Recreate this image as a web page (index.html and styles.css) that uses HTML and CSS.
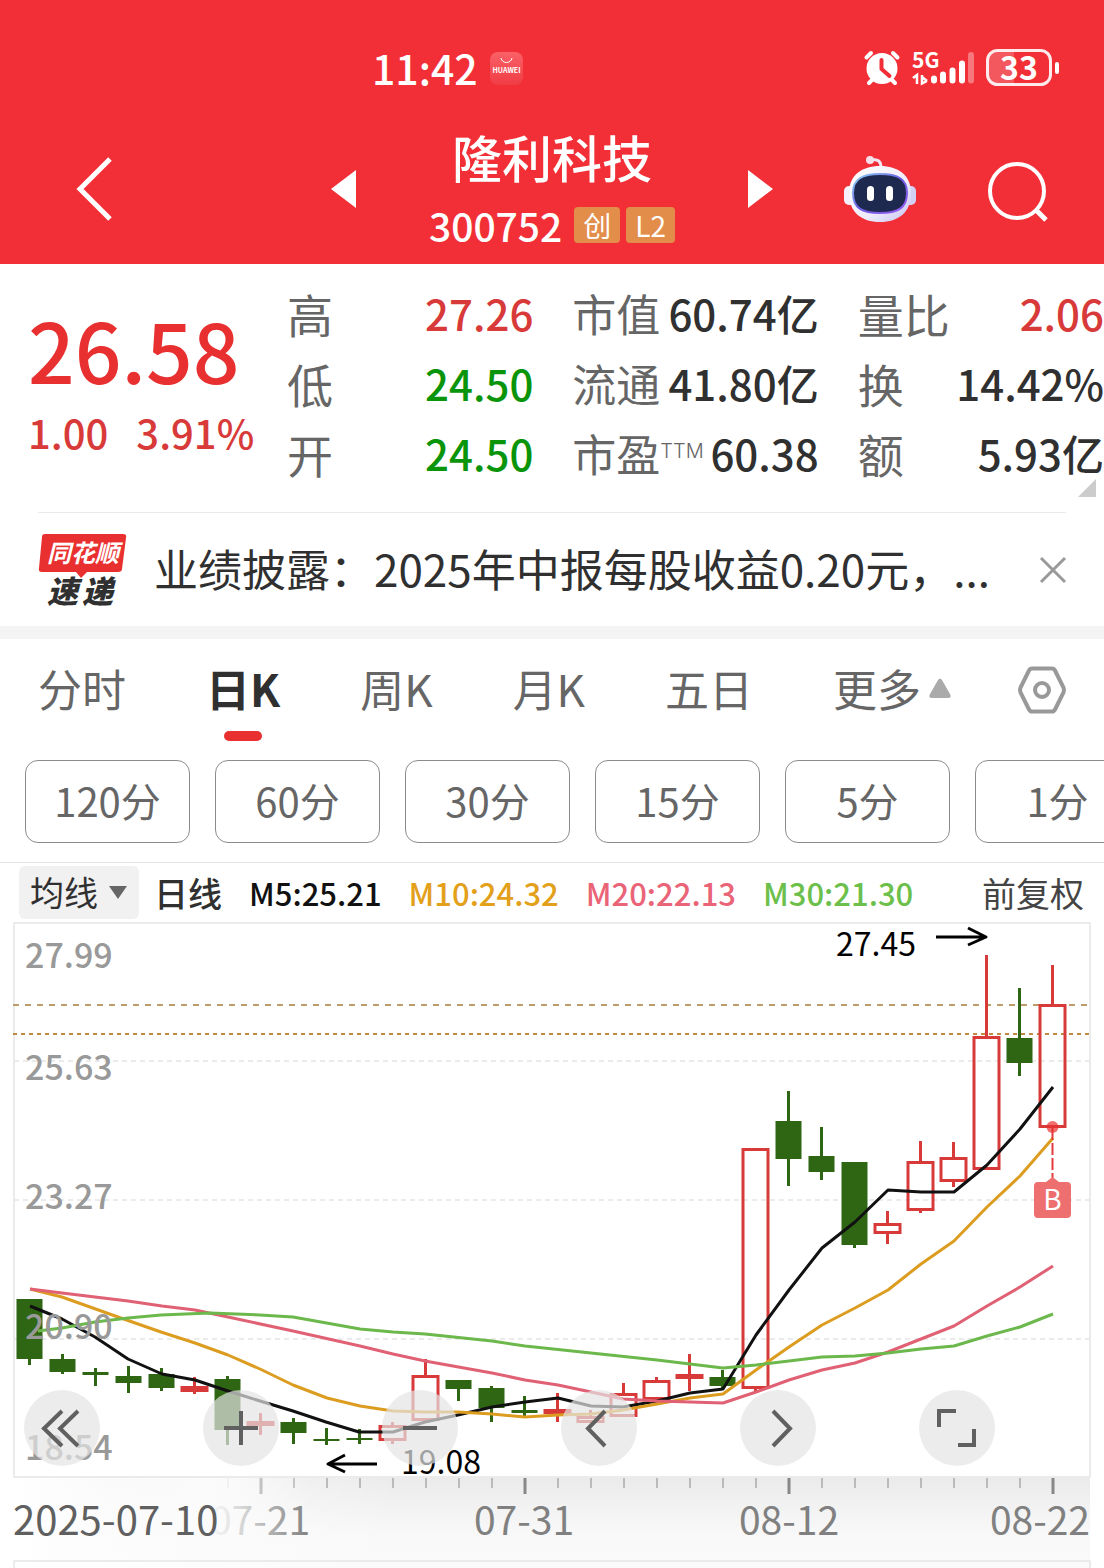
FILE: index.html
```html
<!DOCTYPE html>
<html lang="zh-CN">
<head>
	<meta charset="utf-8">
	<meta name="viewport" content="width=device-width, initial-scale=1.0">
	<title>隆利科技 300752</title>
	<link rel="stylesheet" href="styles.css">
</head>
<body>
	<header class="header">
		<div class="status">
			<div class="status-left">
				<span class="time">11:42</span>
				<svg class="huawei" width="33" height="33" viewBox="0 0 33 33">
					<defs>
						<linearGradient id="hw" x1="0" y1="0" x2="0" y2="1">
							<stop offset="0" stop-color="#fa6168"/>
							<stop offset="1" stop-color="#f03c45"/>
						</linearGradient>
					</defs>
					<rect width="33" height="33" rx="8" fill="url(#hw)"/>
					<path d="M11 6c1 6 10 6 11 0" fill="none" stroke="#fff" stroke-width="1"/>
					<text x="16.5" y="21" text-anchor="middle" class="huawei-text">HUAWEI</text>
				</svg>
			</div>
			<div class="status-right">
				<svg width="36" height="36" viewBox="0 0 36 36">
					<g stroke="#fff" stroke-width="4" stroke-linecap="round">
						<path d="M2.500 7.500L7 3M33.500 7.500L29 3M9 29l-4 4M27 29l4 4"/>
					</g>
					<circle cx="18" cy="18.500" r="15.500" fill="#fff"/>
					<path d="M17.500 10v9l8 7" fill="none" stroke="#f22f37" stroke-width="4" stroke-linecap="round" stroke-linejoin="round"/>
				</svg>
				<svg width="62" height="36" viewBox="0 0 62 36">
					<text x="0" y="18" class="net">5G</text>
					<path d="M1 28l4-3v9M15 31l-5 2.500V25M10 27l5 4" fill="none" stroke="#fff" stroke-width="2.500"/>
					<g stroke="#fff" stroke-width="6" stroke-linecap="round">
						<path d="M22 28.500v2M31 24.500v6M40.500 20.500v10M50 13.500v17"/>
						<path d="M59 5v25.500" stroke-opacity=".35"/>
					</g>
				</svg>
				<svg width="74" height="38" viewBox="0 0 74 38">
					<path d="M12 2h16v34H12A10 10 0 0 1 2 26V12A10 10 0 0 1 12 2z" fill="#fff" fill-opacity=".2"/>
					<rect x="1.500" y="1.500" width="63" height="34" rx="10" fill="none" stroke="#fff" stroke-opacity=".9" stroke-width="3"/>
					<rect x="69" y="13" width="4" height="12" rx="2" fill="#fff"/>
					<text x="33" y="31" text-anchor="middle" class="battery">33</text>
				</svg>
			</div>
		</div>
		<nav class="nav">
			<button class="icon-btn back" type="button" aria-label="返回">
				<svg width="38" height="64" viewBox="0 0 38 64"><path d="M34 2L4 32l30 30" fill="none" stroke="#fff" stroke-width="5"/></svg>
			</button>
			<div class="stock">
				<button class="icon-btn" type="button" aria-label="上一只">
					<svg width="25" height="38" viewBox="0 0 25 38"><path d="M25 0v38L0 19z" fill="#fff"/></svg>
				</button>
				<div class="stock-title">
					<h1>隆利科技</h1>
					<div class="code">
						<span>300752</span>
						<span class="tag">创</span>
						<span class="tag tag-l2">L2</span>
					</div>
				</div>
				<button class="icon-btn" type="button" aria-label="下一只">
					<svg width="25" height="38" viewBox="0 0 25 38"><path d="M0 0v38l25-19z" fill="#fff"/></svg>
				</button>
			</div>
			<div class="nav-right">
				<button class="icon-btn" type="button" aria-label="智能助手">
					<svg width="72" height="68" viewBox="0 0 72 68">
						<defs>
							<linearGradient id="head" x1="0" y1="0" x2="1" y2="1">
								<stop offset="0" stop-color="#fff"/>
								<stop offset=".6" stop-color="#f0ecfb"/>
								<stop offset="1" stop-color="#c6c3f2"/>
							</linearGradient>
							<linearGradient id="rim" x1="0" y1="0" x2="1" y2="1">
								<stop offset="0" stop-color="#8fd8f5"/>
								<stop offset=".5" stop-color="#6a5be0"/>
								<stop offset="1" stop-color="#9a5cf0"/>
							</linearGradient>
						</defs>
						<path d="M28 5c6-1 9 1 9 8" fill="none" stroke="#f3e6f2" stroke-width="3"/>
						<circle cx="26" cy="5" r="4" fill="#f6dfe8"/>
						<rect x="0" y="31" width="12" height="19" rx="5" fill="#f5f0fb"/>
						<rect x="60" y="31" width="12" height="19" rx="5" fill="#d3d0f6"/>
						<path d="M36 11c18 0 31 9 31 27 0 19-12 29-31 29S5 57 5 38C5 20 18 11 36 11z" fill="url(#head)"/>
						<path d="M36 19c18 0 27 5 27 19 0 15-9 20-27 20S9 53 9 38c0-14 9-19 27-19z" fill="#1e2950" stroke="url(#rim)" stroke-width="2"/>
						<rect x="23" y="31" width="7" height="15" rx="3.500" fill="#fff"/>
						<rect x="42" y="31" width="7" height="15" rx="3.500" fill="#fff"/>
					</svg>
				</button>
				<button class="icon-btn" type="button" aria-label="搜索">
					<svg width="60" height="66" viewBox="0 -6 60 66"><circle cx="29" cy="29" r="27" fill="none" stroke="#fff" stroke-width="4"/><path d="M47 47l11 11" stroke="#fff" stroke-width="5"/></svg>
				</button>
			</div>
		</nav>
	</header>

	<section class="quote">
		<div class="price">
			<div class="price-now">26.58</div>
			<div class="price-change"><span>1.00</span><span>3.91%</span></div>
		</div>
		<dl class="stats">
			<div class="stat"><dt>高</dt><dd class="up">27.26</dd></div>
			<div class="stat"><dt>市值</dt><dd>60.74亿</dd></div>
			<div class="stat"><dt>量比</dt><dd class="up">2.06</dd></div>
			<div class="stat"><dt>低</dt><dd class="down">24.50</dd></div>
			<div class="stat"><dt>流通</dt><dd>41.80亿</dd></div>
			<div class="stat"><dt>换</dt><dd>14.42%</dd></div>
			<div class="stat"><dt>开</dt><dd class="down">24.50</dd></div>
			<div class="stat"><dt>市盈<span class="ttm">TTM</span></dt><dd>60.38</dd></div>
			<div class="stat"><dt>额</dt><dd>5.93亿</dd></div>
		</dl>
		<span class="corner"></span>
	</section>

	<section class="news">
		<svg class="news-logo" width="90" height="76" viewBox="0 0 90 76">
			<path d="M7 2h78q4 0 3 4l-4 31q0 3-4 3H49l-6 6-5-6H4q-4 0-3-4L4 5q0-3 3-3z" fill="#e93030"/>
			<text x="9" y="30" class="logo-top">同花顺</text>
			<text x="9" y="71" class="logo-bottom">速</text>
			<text x="44" y="71" class="logo-bottom">递</text>
		</svg>
		<a class="news-text" href="#">业绩披露：2025年中报每股收益0.20元，...</a>
		<button class="icon-btn" type="button" aria-label="关闭">
			<svg width="26" height="26" viewBox="0 0 26 26"><path d="M1 1l24 24M25 1L1 25" stroke="#999" stroke-width="3"/></svg>
		</button>
	</section>

	<nav class="tabs">
		<div class="tab-list">
			<button type="button" class="tab">分时</button>
			<button type="button" class="tab active">日K</button>
			<button type="button" class="tab">周K</button>
			<button type="button" class="tab">月K</button>
			<button type="button" class="tab">五日</button>
			<button type="button" class="tab more">更多
				<svg width="22" height="20" viewBox="0 0 22 20"><path d="M9 2q2-3 4 0l8 14q2 4-2 4H3q-4 0-2-4z" fill="#aaa"/></svg>
			</button>
		</div>
		<button type="button" class="icon-btn settings" aria-label="设置">
			<svg width="48" height="48" viewBox="0 0 48 48">
				<path d="M14 2.500h20q2 0 3 2l8.500 17q1 2.500 0 5L37 43.500q-1 2-3 2H14q-2 0-3-2L2.500 26.500q-1-2.500 0-5L11 4.500q1-2 3-2z" fill="none" stroke="#999" stroke-width="4"/>
				<circle cx="24" cy="24" r="7" fill="none" stroke="#999" stroke-width="4"/>
			</svg>
		</button>
	</nav>

	<div class="periods">
		<button type="button" class="period">120分</button>
		<button type="button" class="period">60分</button>
		<button type="button" class="period">30分</button>
		<button type="button" class="period">15分</button>
		<button type="button" class="period">5分</button>
		<button type="button" class="period">1分</button>
	</div>

	<div class="legend">
		<label class="indicator">
			<select aria-label="指标">
				<option>均线</option>
			</select>
		</label>
		<span class="legend-name">日线</span>
		<span class="ma ma5">M5:25.21</span>
		<span class="ma ma10">M10:24.32</span>
		<span class="ma ma20">M20:22.13</span>
		<span class="ma ma30">M30:21.30</span>
		<button type="button" class="adjust">前复权</button>
	</div>

	<section class="chart">
		<svg class="kline" viewBox="0 922 1104 646">
			<defs>
				<linearGradient id="axisbg" x1="0" y1="0" x2="0" y2="1">
					<stop offset="0" stop-color="#ebebeb"/>
					<stop offset=".6" stop-color="#f8f8f8"/>
					<stop offset="1" stop-color="#fafafa"/>
				</linearGradient>
				<linearGradient id="axisfade" x1="0" y1="0" x2="1" y2="0">
					<stop offset="0" stop-color="#fff"/>
					<stop offset="1" stop-color="#fff" stop-opacity="0"/>
				</linearGradient>
				<linearGradient id="datefade" x1="0" y1="0" x2="1" y2="0">
					<stop offset="0" stop-color="#fbfbfb" stop-opacity="0"/>
					<stop offset=".65" stop-color="#fbfbfb"/>
					<stop offset=".72" stop-color="#fbfbfb" stop-opacity=".85"/>
					<stop offset="1" stop-color="#fbfbfb" stop-opacity="0"/>
				</linearGradient>
			</defs>

			<!-- date axis background -->
			<rect x="14" y="1478" width="1076" height="90" fill="url(#axisbg)"/>
			<rect x="14" y="1478" width="386" height="90" fill="url(#axisfade)"/>

			<!-- frame and grid -->
			<path class="frame" d="M14 923H1090V1477H14zM14 1568V1561H1090V1568"/>
			<path class="grid" d="M14 1061H1090M14 1200H1090M14 1339H1090"/>
			<path class="line-last" d="M13 1005H1090"/>
			<path class="line-cost" d="M13 1034H1090"/>

			<!-- candles: down -->
			<path class="wick down-line" d="M29.500 1359V1365M62.500 1354V1374M95.500 1368V1386M128.500 1366V1393M161.500 1368V1391M227.500 1376V1445M293.500 1418V1444M326.500 1428V1445M359.500 1429V1444M458.500 1380V1401M491.500 1386V1422M524.500 1396V1417M722.500 1370V1389M788.500 1091V1186M821.500 1127V1180M854.500 1162V1248M1019.500 988V1076"/>
			<g class="down-body">
				<rect x="16.500" y="1299" width="26" height="60"/>
				<rect x="49.500" y="1359" width="26" height="13"/>
				<rect x="82.500" y="1372" width="26" height="3"/>
				<rect x="115.500" y="1376" width="26" height="7"/>
				<rect x="148.500" y="1374" width="26" height="14"/>
				<rect x="214.500" y="1379" width="26" height="51"/>
				<rect x="280.500" y="1422" width="26" height="11"/>
				<rect x="313.500" y="1439" width="26" height="2"/>
				<rect x="346.500" y="1438" width="26" height="2"/>
				<rect x="445.500" y="1380" width="26" height="9"/>
				<rect x="478.500" y="1388" width="26" height="20"/>
				<rect x="511.500" y="1410" width="26" height="3"/>
				<rect x="709.500" y="1377" width="26" height="9"/>
				<rect x="775.500" y="1121" width="26" height="38"/>
				<rect x="808.500" y="1156" width="26" height="16"/>
				<rect x="841.500" y="1162" width="26" height="83"/>
				<rect x="1006.500" y="1038" width="26" height="25"/>
			</g>

			<!-- candles: up -->
			<path class="wick up-line" d="M194.500 1377V1394M260.500 1413V1435M392.500 1422V1426M392.500 1440V1444M425.500 1359V1376M557.500 1393V1422M590.500 1410V1417M623.500 1383V1394M656.500 1377V1381M689.500 1354V1391M755.500 1388V1392M887.500 1211V1224M887.500 1233V1244M920.500 1141V1162M920.500 1210V1213M953.500 1142V1158M953.500 1181V1187M986.500 955V1037M1052.500 965V1005"/>
			<g class="up-body">
				<rect x="182" y="1387.500" width="25" height="3"/>
				<rect x="248" y="1422.500" width="25" height="2"/>
				<rect x="380" y="1426.500" width="25" height="13"/>
				<rect x="413" y="1376.500" width="25" height="43"/>
				<rect x="545" y="1410.500" width="25" height="2"/>
				<rect x="578" y="1417.500" width="25" height="4"/>
				<rect x="611" y="1394.500" width="25" height="21"/>
				<rect x="644" y="1381.500" width="25" height="17"/>
				<rect x="677" y="1375.500" width="25" height="2"/>
				<rect x="743" y="1149.500" width="25" height="238"/>
				<rect x="875" y="1224.500" width="25" height="8"/>
				<rect x="908" y="1162.500" width="25" height="47"/>
				<rect x="941" y="1158.500" width="25" height="22"/>
				<rect x="974" y="1037.500" width="25" height="131"/>
				<rect x="1040" y="1005.500" width="25" height="121"/>
			</g>

			<!-- moving averages -->
			<polyline class="avg avg5" points="30,1306 62,1319 95,1337 128,1359 162,1374 195,1380 228,1391 260,1401 293,1411 326,1422 359,1432 393,1432 425,1422 458,1415 492,1407 525,1402 558,1398 591,1406 623,1407 657,1401 690,1393 723,1389 756,1335 789,1290 822,1248 855,1222 888,1190 921,1192 954,1192 987,1165 1020,1129 1053,1087"/>
			<polyline class="avg avg10" points="30,1289 62,1297 118,1317 161,1332 195,1343 228,1355 260,1369 293,1385 327,1398 360,1406 393,1411 425,1412 458,1412 492,1414 525,1417 558,1415 591,1414 623,1410 657,1404 690,1398 723,1394 756,1370 789,1347 822,1325 855,1308 888,1290 921,1264 954,1241 987,1207 1020,1176 1053,1138"/>
			<polyline class="avg avg20" points="30,1289 62,1293 95,1297 128,1301 162,1306 195,1310 228,1317 293,1331 360,1346 393,1354 425,1361 492,1373 525,1380 558,1385 591,1392 623,1399 657,1401 723,1403 756,1392 789,1380 822,1370 855,1363 888,1352 921,1339 954,1326 987,1306 1020,1287 1053,1266"/>
			<polyline class="avg avg30" points="38,1331 62,1328 95,1322 128,1318 161,1315 210,1313 260,1315 293,1317 360,1329 393,1332 425,1334 492,1341 525,1346 591,1353 657,1360 723,1368 756,1365 822,1357 855,1356 888,1353 921,1349 954,1346 987,1336 1020,1327 1053,1314"/>

			<!-- buy mark -->
			<path d="M1052.500 1128V1178" stroke="#e33b3d" stroke-width="2" stroke-dasharray="12 3"/>
			<circle cx="1052.500" cy="1127" r="6" fill="#e93030" fill-opacity=".7"/>
			<path d="M1038 1182h8l6.500-5 6.500 5h8q4 0 4 4v28q0 4-4 4h-29q-4 0-4-4v-28q0-4 4-4z" fill="#ee6f6f"/>
			<text x="1052.500" y="1210" text-anchor="middle" class="mark">B</text>

			<!-- highest and lowest price -->
			<text x="836" y="956" class="peak">27.45</text>
			<path class="arrow" d="M936 937H986M968 928L986 937L968 945"/>
			<text x="401" y="1474" class="peak">19.08</text>
			<path class="arrow" d="M377 1464H328M345 1455L328 1464L345 1472"/>

			<g class="scale">
				<text x="25" y="968">27.99</text>
				<text x="25" y="1080">25.63</text>
				<text x="25" y="1209">23.27</text>
				<text x="25" y="1339">20.90</text>
				<text x="25" y="1460">18.54</text>
			</g>

			<!-- date axis -->
			<path class="tick" d="M228 1478v10M294 1478v10M327 1478v10M360 1478v10M393 1478v10M426 1478v10M459 1478v10M492 1478v10M558 1478v10M591 1478v10M624 1478v10M657 1478v10M690 1478v10M723 1478v10M756 1478v10M822 1478v10M855 1478v10M888 1478v10M921 1478v10M954 1478v10M987 1478v10M1020 1478v10"/>
			<path class="tick-major" d="M261 1478v16M525 1478v16M789 1478v16M1053 1478v16"/>
			<g class="date">
				<text x="260" y="1535" text-anchor="middle">07-21</text>
				<text x="524" y="1535" text-anchor="middle">07-31</text>
				<text x="789" y="1535" text-anchor="middle">08-12</text>
				<text x="1090" y="1535" text-anchor="end">08-22</text>
				<rect x="14" y="1478" width="296" height="82" fill="url(#datefade)"/>
				<text x="13" y="1535" class="date-start">2025-07-10</text>
			</g>
		</svg>

		<div class="tools">
			<button type="button" class="tool" aria-label="最左"><svg viewBox="0 0 76 76"><path d="M38 21L20 38.500 38 56M54 21L36 38.500 54 56"/></svg></button>
			<button type="button" class="tool" aria-label="放大"><svg viewBox="0 0 76 76"><path d="M38 21v34M21 38h34"/></svg></button>
			<button type="button" class="tool" aria-label="缩小"><svg viewBox="0 0 76 76"><path d="M21 38h34"/></svg></button>
			<button type="button" class="tool" aria-label="左移"><svg viewBox="0 0 76 76"><path d="M44 21L27 38.500 44 56"/></svg></button>
			<button type="button" class="tool" aria-label="右移"><svg viewBox="0 0 76 76"><path d="M33 21l17 17.500L33 56"/></svg></button>
			<button type="button" class="tool" aria-label="全屏"><svg viewBox="0 0 76 76"><path d="M37 21H20v16M39 55h16V39"/></svg></button>
		</div>
	</section>
</body>
</html>
```
FILE: styles.css
```css
* {
	box-sizing: border-box;
}
body {
	margin: 0;
	background-color: #fff;
	color: #303030;
	font-family: "Noto Sans CJK SC", "Liberation Sans", sans-serif;
	overflow-x: hidden;
}
button, select {
	font-family: inherit;
	color: inherit;
	background: none;
	border: none;
	padding: 0;
	margin: 0;
}
svg {
	display: block;
	flex: none;
	overflow: visible;
}
.icon-btn {
	flex: none;
}

/* Header */
.header {
	background-color: #f22f37;
	color: #fff;
	height: 264px;
}
.status {
	display: flex;
	justify-content: space-between;
	align-items: center;
	height: 120px;
	padding: 16px 44px 0 372px;
}
.status-left, .status-right {
	display: flex;
	align-items: center;
	gap: 12px;
}
.time {
	font-size: 41px;
	line-height: 60px;
	padding-bottom: 2px;
	font-weight: 500;
}
.huawei-text {
	font-size: 7px;
	font-weight: 700;
	fill: #fff;
}
.net {
	font-size: 21px;
	font-weight: 700;
	fill: #fff;
}
.battery {
	font-size: 32px;
	font-weight: 700;
	fill: #fff;
}
.nav {
	display: grid;
	grid-template-columns: 1fr 442px 1fr;
	align-items: center;
	height: 138px;
}
.back {
	justify-self: start;
	margin-left: 76px;
}
.stock {
	display: flex;
	justify-content: space-between;
	align-items: center;
}
.stock-title {
	text-align: center;
}
.stock-title h1 {
	margin: 0;
	font-size: 50px;
	line-height: 72px;
	font-weight: 500;
}
.code {
	display: flex;
	align-items: center;
	gap: 6px;
	font-size: 39px;
	line-height: 66px;
	font-weight: 500;
}
.tag {
	background-color: #e38d4b;
	border-radius: 4px;
	padding: 0 9px;
	font-size: 28px;
	line-height: 36px;
	font-weight: 400;
}
.code .tag:nth-child(2) {
	margin-left: 6px;
}
.nav-right {
	display: flex;
	justify-content: flex-end;
	align-items: center;
	gap: 72px;
	padding-right: 56px;
}

/* Quote */
.quote {
	display: flex;
	position: relative;
	height: 248px;
	padding: 14px 0 0 28px;
}
.price {
	flex: none;
	width: 259px;
	color: #e93030;
}
.price-now {
	margin-top: 18px;
	font-size: 82px;
	line-height: 106px;
	font-weight: 500;
}
.price-change {
	display: flex;
	gap: 28px;
	font-size: 40px;
	line-height: 60px;
	font-weight: 500;
	color: #d83a3a;
}
.stats {
	flex: 1;
	display: grid;
	grid-template-columns: repeat(3, 1fr);
	grid-auto-rows: 70px;
	column-gap: 39px;
	margin: 0;
}
.stat {
	display: flex;
	justify-content: space-between;
	line-height: 70px;
	white-space: nowrap;
}
.stat dt {
	font-size: 46px;
	color: #666;
}
.stat:nth-child(3n+2) dt {
	font-size: 44px;
}
.stat dd {
	margin: 0;
	font-size: 42px;
	font-weight: 500;
}
.stat .up {
	color: #d83a3a;
}
.stat .down {
	color: #0a940a;
}
.ttm {
	font-family: Inter, sans-serif;
	font-size: 20px;
	font-weight: 300;
	vertical-align: 14px;
	line-height: 1;
}
.corner {
	position: absolute;
	right: 8px;
	bottom: 15px;
	border-left: 18px solid transparent;
	border-bottom: 18px solid #ccc;
}

/* News */
.news {
	display: flex;
	align-items: center;
	height: 114px;
	margin: 0 38px;
	border-top: 1px solid #eaeaea;
}
.news-text {
	flex: 1;
	margin-left: 26px;
	padding-bottom: 4px;
	font-size: 44px;
	line-height: 64px;
	color: #303030;
	text-decoration: none;
	white-space: nowrap;
	overflow: hidden;
}
.logo-top {
	font-size: 24px;
	font-weight: 700;
	font-style: italic;
	fill: #fff;
}
.logo-bottom {
	font-size: 31px;
	font-weight: 900;
	font-style: italic;
	fill: #303030;
}

/* Tabs */
.tabs {
	display: flex;
	justify-content: space-between;
	align-items: flex-start;
	height: 134px;
	padding: 19px 38px 0;
	border-top: 13px solid #f4f4f4;
}
.tab-list {
	display: flex;
	gap: 80px;
}
.tab {
	position: relative;
	flex: none;
	font-size: 44px;
	line-height: 60px;
	color: #666;
}
.tab.active {
	color: #303030;
	font-weight: 700;
}
.tab.active::after {
	content: "";
	position: absolute;
	left: 50%;
	bottom: -23px;
	width: 38px;
	height: 10px;
	margin-left: -19px;
	border-radius: 5px;
	background-color: #e93030;
}
.more {
	display: flex;
	align-items: center;
	gap: 8px;
}
.settings {
	margin-top: 8px;
}

/* Minute periods */
.periods {
	display: flex;
	gap: 25px;
	padding: 0 0 19px 25px;
	overflow: hidden;
	border-bottom: 1px solid #e4e4e4;
}
.period {
	flex: none;
	width: 165px;
	height: 83px;
	padding-bottom: 4px;
	border: 1px solid #8c8c8c;
	border-radius: 13px;
	font-size: 40px;
	color: #666;
}

/* Moving average legend */
.legend {
	display: flex;
	align-items: center;
	gap: 27px;
	height: 59px;
	padding: 0 20px 0 19px;
	font-size: 31px;
	white-space: nowrap;
}
.indicator {
	position: relative;
	margin-right: -12px;
}
.indicator select {
	display: block;
	appearance: none;
	width: 120px;
	height: 53px;
	padding: 0 0 3px 11px;
	border-radius: 6px;
	background-color: #f1f1f1;
	font-size: 34px;
}
.indicator::after {
	content: "";
	position: absolute;
	right: 12px;
	top: 20px;
	border: 9px solid transparent;
	border-top: 13px solid #666;
	border-bottom: none;
}
.legend-name, .ma {
	font-weight: 500;
}
.legend-name {
	font-size: 34px;
}
.ma5 {
	color: #111;
}
.ma10 {
	color: #e3a01b;
}
.ma20 {
	color: #ea6478;
}
.ma30 {
	color: #6cbf4b;
}
.adjust {
	margin-left: auto;
	font-size: 34px;
	color: #444;
}

/* K line chart */
.chart {
	position: relative;
}
.kline {
	width: 100%;
	height: auto;
}
.kline path, .kline polyline {
	stroke-linejoin: round;
}
.frame {
	fill: none;
	stroke: #ebebeb;
	stroke-width: 2;
}
.grid {
	stroke: #ebebeb;
	stroke-width: 2;
	stroke-dasharray: 5 4;
}
.line-last {
	stroke: #bd9c6b;
	stroke-width: 2;
	stroke-dasharray: 6 6;
}
.line-cost {
	stroke: #c08a45;
	stroke-width: 2;
	stroke-dasharray: 4 4;
}
.wick {
	stroke-width: 3;
}
.down-line {
	stroke: #2f6614;
}
.down-body {
	fill: #2f6614;
}
.up-line {
	stroke: #d83a3a;
}
.up-body {
	fill: none;
	stroke: #d83a3a;
	stroke-width: 3;
}
.avg {
	fill: none;
	stroke-width: 3;
}
.avg5 {
	stroke: #111;
}
.avg10 {
	stroke: #dc9c20;
}
.avg20 {
	stroke: #e06074;
}
.avg30 {
	stroke: #6cb84c;
}
.mark {
	font-size: 28px;
	fill: #fff;
}
.peak {
	font-size: 32px;
	fill: #000;
}
.arrow {
	fill: none;
	stroke: #000;
	stroke-width: 3;
}
.scale {
	font-size: 34px;
	font-weight: 500;
	fill: #999;
}
.tick {
	stroke: #bbb;
	stroke-width: 2;
}
.tick-major {
	stroke: #888;
	stroke-width: 3;
}
.date {
	font-size: 39px;
	fill: #808080;
}
.date-start {
	font-size: 40px;
	fill: #606060;
}
.tools {
	position: absolute;
	left: 24px;
	right: 109px;
	bottom: 102px;
	display: flex;
	justify-content: space-between;
}
.tool {
	width: 76px;
	height: 76px;
	border-radius: 50%;
	background-color: rgba(228, 228, 228, .7);
}
.tool path {
	fill: none;
	stroke: #606060;
	stroke-width: 4;
}
```
